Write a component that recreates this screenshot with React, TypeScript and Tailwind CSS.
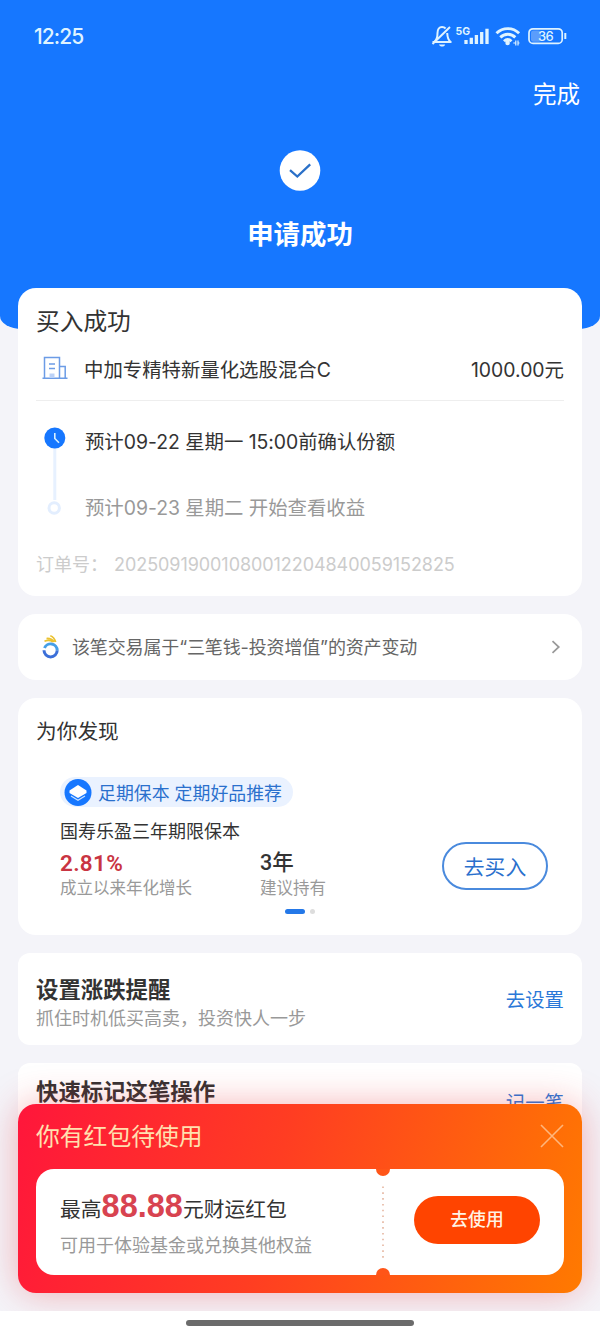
import type { ReactNode } from 'react'
import clsx from 'clsx'

function Card({ className, children }: { className?: string; children: ReactNode }) {
  return <section className={clsx('mx-[18px] bg-white px-[18px]', className)}>{children}</section>
}

function StatusBar() {
  return (
    <div className="flex h-[72px] items-center justify-between pl-[34px] pr-[33px] text-[#dff3ff]">
      <span className="pt-px text-[21px] font-medium leading-6 tracking-[-0.9px]">12:25</span>
      <svg className="h-6 w-[136px]" viewBox="0 0 136 24" fill="none" stroke="currentColor">
        {/* muted bell */}
        <path d="M1.500 17.900H20.500M3.500 17.500c2.500-2 3-4 3-8.500C6.500 5.500 8.300 3 11 3c1.500 0 2.700.5 3.600 1.500M16.200 9c.2 4 .8 6.500 3 8.500M1.500 20L19 3" strokeWidth="2" />
        <path d="M8 20.500h6.200c-.5 1.500-1.500 2-3.100 2s-2.600-.5-3.100-2z" fill="currentColor" stroke="none" />
        <text x="24.500" y="11.300" fontSize="10.500" fontWeight="700" fill="currentColor" stroke="none">5G</text>
        {/* signal */}
        <path d="M35 20v-4M40.300 20v-6.300M45.400 20v-9M50.700 20V8M56 20V4.700" strokeWidth="3.300" />
        {/* wifi */}
        <path d="M65.500 9.300c6.300-6.200 16.300-6.200 22.600 0M69.300 13.400c4.200-4.200 10.700-4.200 15 0M73 17.200c2.200-2.100 5.200-2.100 7.500 0" strokeWidth="2.900" />
        <circle cx="76.600" cy="18.900" r="2.300" fill="currentColor" stroke="none" />
        <path d="M82.300 19h2.500v-2.500M84.800 17v4.500M87 16.500v5M87 19h1.500" strokeWidth="1.200" />
        {/* battery */}
        <rect x="98" y="4.800" width="33.200" height="14.600" rx="4" strokeWidth="1.700" />
        <rect x="100" y="6.500" width="10" height="11.200" rx="2.500" fill="#5b9dfb" stroke="none" />
        <path d="M134.300 9v6" strokeWidth="2" />
        <text x="107" y="16.900" fontSize="13" fontWeight="500" fill="currentColor" stroke="none" letterSpacing="-0.6">36</text>
      </svg>
    </div>
  )
}

function Header() {
  return (
    <header className="h-[329px] shrink-0 rounded-b-[22px_13px] bg-[#1677ff] text-white">
      <StatusBar />
      <div className="flex h-11 items-center justify-end pr-5 pt-px text-[23.5px] leading-none">完成</div>
      <div className="mt-[33px] flex flex-col items-center">
        <svg className="size-[42px]" viewBox="0 0 42 42">
          <circle cx="21" cy="21.500" r="20.300" fill="#fff" />
          <path d="M11 21.200l7.300 6.300L31.200 15.300" fill="none" stroke="#2a70c8" strokeWidth="2.300" />
        </svg>
        <h1 className="mt-[25px] text-[26.4px] font-semibold leading-[36px]">申请成功</h1>
      </div>
    </header>
  )
}

function OrderCard() {
  return (
    <Card className="-mt-[41px] h-[308px] rounded-[18px]">
      <h2 className="pt-4 text-[23.7px] leading-9">买入成功</h2>
      <div className="flex h-[61px] items-center border-b border-[#eee] pt-px text-[19.400px]">
        <svg className="mb-[5px] ml-1.5 h-6 w-[26px]" viewBox="0 0 26 24" fill="none" stroke="#6c9ce6" strokeWidth="1.500">
          <path d="M2.500 22V1.500h15V22M17.500 10.500h5.700V22M.5 22.300h25" />
          <path d="M7 8h6M7 12.500h6" />
          <path d="M7.500 17.500h5V22h-5z" fill="#bcd2f7" stroke="none" />
        </svg>
        <span className="ml-4">中加专精特新量化选股混合C</span>
        <span className="ml-auto">1000.00元</span>
      </div>
      <div className="flex pt-[26px]">
        <svg className="ml-2 h-[91px] w-[22px]" viewBox="0 0 22 91" fill="none">
          <path d="M10.800 20v53" stroke="#e7f1ff" strokeWidth="3" />
          <circle cx="10.800" cy="11" r="10.500" fill="#1677ff" />
          <path d="M10.800 6v5.500l4.200 4.200" stroke="#d8f0ff" strokeWidth="1.600" />
          <circle cx="10.200" cy="81" r="5.200" stroke="#e3eefe" strokeWidth="3" />
        </svg>
        <div className="ml-[19px] text-[19.400px] leading-[30px] tracking-[-0.030px]">
          <p>预计09-22 星期一 15:00前确认份额</p>
          <p className="mt-9 text-[#999]">预计09-23 星期二 开始查看收益</p>
        </div>
      </div>
      <p className="mt-[27px] flex text-[18px] leading-[30px] text-[#ccc]">
        <span className="w-[78px]">订单号：</span>
        <span className="tracking-[-0.06px]">20250919001080012204840059152825</span>
      </p>
    </Card>
  )
}

function AssetCard() {
  return (
    <Card className="mt-[18px] flex h-[66px] items-center rounded-[18px] text-[#666]">
      <svg className="ml-1.5 h-[26px] w-[18px]" viewBox="0 0 18 26" fill="none" strokeWidth="3">
        <path d="M2 16.300a6.600 6.600 0 0 0 13.200 0" stroke="#3b6fd9" />
        <path d="M2.500 14a6.600 6.600 0 0 1 12.700 2.300" stroke="#459fe8" />
        <path d="M2.500 7.200c3-1.300 6-.9 8.500.6M4.500 4.500c3.500-.3 6 1 7.800 3.400M8.300 1.700c2.700.9 4.500 3.200 5.400 6.300" stroke="#ebc230" strokeWidth="1.700" />
      </svg>
      <span className="ml-3 text-[18px] tracking-[-0.140px]">该笔交易属于“三笔钱-投资增值”的资产变动</span>
      <svg className="ml-auto mr-[3px] h-[14px] w-[10px]" viewBox="0 0 10 14" fill="none">
        <path d="M1.500 1.200L7.800 7 1.500 12.800" stroke="#999" strokeWidth="1.700" />
      </svg>
    </Card>
  )
}

function DiscoverCard() {
  return (
    <Card className="mt-[18px] h-[237px] rounded-[18px]">
      <h2 className="pt-[19px] text-[20.700px] leading-[30px]">为你发现</h2>
      <div className="ml-6 mt-[30px] flex h-[30px] w-[233px] items-center rounded-full bg-[#eaf2ff] pl-1 text-[17.900px] text-[#2a70cd]">
        <svg className="size-7" viewBox="0 0 28 28">
          <circle cx="14" cy="14.500" r="13.500" fill="#1677ff" />
          <path d="M14 7l8.500 5.500V15L14 20l-8.500-5v-2.500z" fill="#fff" />
          <path d="M7 18l7 4.200 7-4.200" fill="none" stroke="#cbe3ff" strokeWidth="1.200" />
        </svg>
        <span className="ml-1.5 pt-1">足期保本 定期好品推荐</span>
      </div>
      <div className="ml-6 flex">
        <div className="w-[200px]">
          <p className="mt-[11px] text-[18px] leading-[28px]">国寿乐盈三年期限保本</p>
          <p className="mt-[3px] font-[Roboto,sans-serif] text-[22.500px] font-semibold leading-[28px] tracking-[0.300px] text-[#c93442]">2.81%</p>
          <p className="text-[16.500px] leading-[22px] text-[#999]">成立以来年化增长</p>
        </div>
        <div className="pt-[42px]">
          <p className="font-[Roboto,'Noto_Sans_CJK_SC',sans-serif] text-[21.500px] font-medium leading-[28px]">3年</p>
          <p className="text-[16.500px] leading-[22px] text-[#999]">建议持有</p>
        </div>
        <button className="ml-auto mr-4 mt-[35px] h-12 w-[106px] rounded-full border-2 border-[#4a8add] pt-[3px] text-[20.800px] text-[#2a70cd]">
          去买入
        </button>
      </div>
      <div className="mt-2.5 flex items-center pl-[249px]">
        <span className="h-[5px] w-5 rounded-sm bg-[#2478e8]" />
        <span className="ml-[5px] size-[5px] rounded-sm bg-[#ddd]" />
      </div>
    </Card>
  )
}

function Coupon() {
  return (
    <aside className="absolute inset-x-[18px] top-[1103.500px] h-[189.500px] rounded-[18px] bg-[linear-gradient(105deg,#ff163b_0%,#ff3d22_45%,#ff7a00_100%)] px-[18px] shadow-[0_0_36px_rgba(230,40,50,0.350)]">
      <div className="flex h-[65.500px] items-center justify-between text-[23.800px] text-[#ffe0b0]">
        <span className="pt-0.5">你有红包待使用</span>
        <svg className="size-6" viewBox="0 0 24 24" fill="none" stroke="#ffb67c" strokeWidth="1.600">
          <path d="M1 1l22 22M23 1L1 23" />
        </svg>
      </div>
      <div className="relative flex h-[106px] items-center overflow-hidden rounded-[18px] bg-white px-6">
        <div className="pt-[3px]">
          <p className="flex items-baseline text-[20.800px] leading-[36px]">
            最高
            <b className="font-['Liberation_Sans',sans-serif] text-[32.500px] font-bold leading-[36px] text-[#d84350]">88.88</b>
            元财运红包
          </p>
          <p className="mt-1 text-[18px] leading-[28px] text-[#999]">可用于体验基金或兑换其他权益</p>
        </div>
        <button className="mb-1 ml-auto h-12 w-[126px] rounded-full bg-[#ff4400] pt-px text-[17.800px] font-medium text-[#fff3e4]">
          去使用
        </button>
        <span className="absolute -top-[7px] left-[340px] size-[14px] rounded-full bg-[#ff5518]" />
        <span className="absolute -bottom-[7px] left-[340px] size-[14px] rounded-full bg-[#ff5518]" />
        <svg className="absolute left-[346px] top-4 h-[74px] w-0.5" viewBox="0 0 2 74">
          <path d="M1 1.500v72" stroke="#e5b59f" strokeWidth="1.600" strokeDasharray="1.600 4.200" />
        </svg>
      </div>
    </aside>
  )
}

export default function App() {
  return (
    <main className="relative flex h-[1335px] w-[600px] flex-col overflow-hidden whitespace-nowrap bg-[#f4f4f9] font-[Inter,'Noto_Sans_CJK_SC',sans-serif] text-[#333]">
      <Header />
      <OrderCard />
      <AssetCard />
      <DiscoverCard />
      <Card className="mt-[18px] flex h-[92px] items-center justify-between rounded-xl">
        <div className="pt-2">
          <h2 className="text-[22.400px] font-semibold leading-[32px]">设置涨跌提醒</h2>
          <p className="text-[18px] leading-[26px] text-[#999]">抓住时机低买高卖，投资快人一步</p>
        </div>
        <a className="pt-[3px] text-[19.400px] text-[#2a78d8]">去设置</a>
      </Card>
      <Card className="mt-[18px] flex h-[92px] justify-between rounded-xl">
        <h2 className="pt-[13px] text-[22.400px] font-semibold leading-[32px]">快速标记这笔操作</h2>
        <a className="pt-[25px] text-[19.400px] leading-[30px] text-[#2a78d8]">记一笔</a>
      </Card>
      <Coupon />
      <footer className="absolute inset-x-0 bottom-0 flex h-6 justify-center bg-white pt-[9px]">
        <span className="h-1.5 w-[228px] rounded-full bg-[#6b6b6b]" />
      </footer>
    </main>
  )
}
